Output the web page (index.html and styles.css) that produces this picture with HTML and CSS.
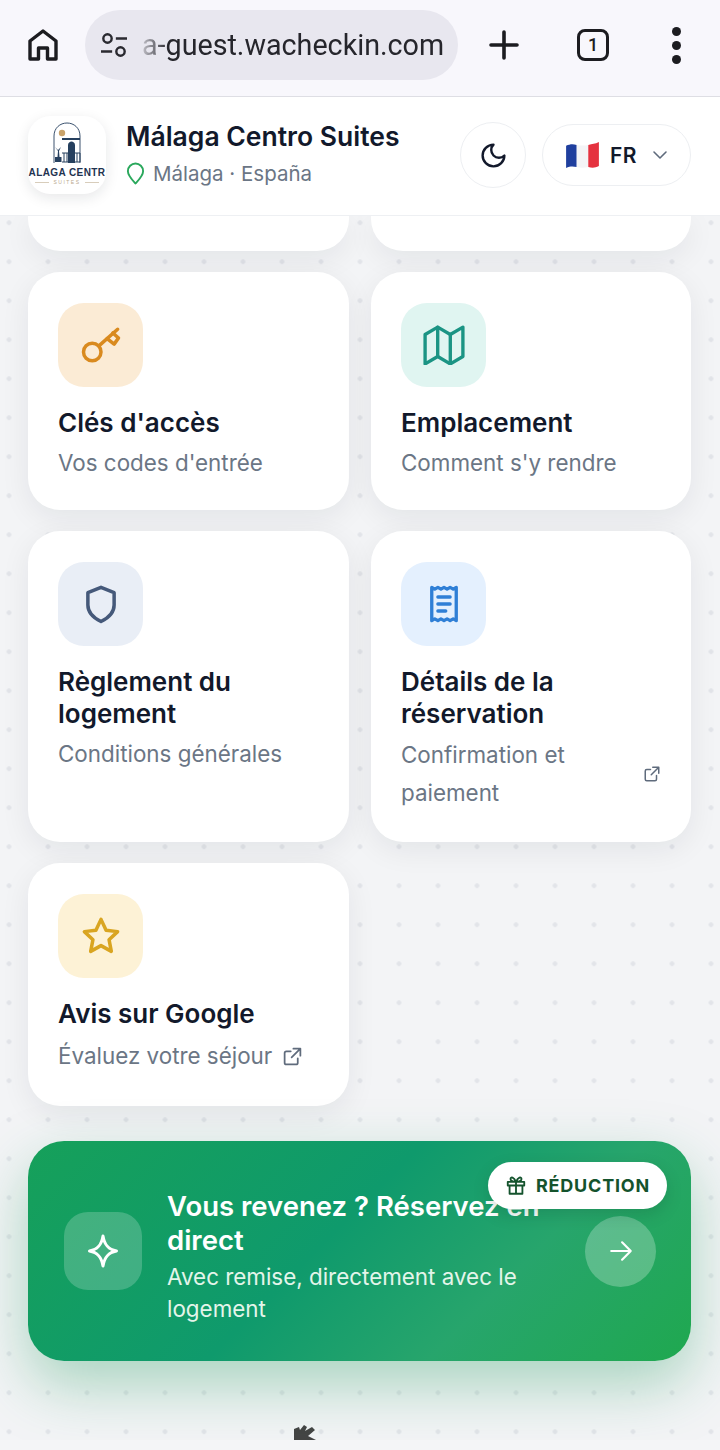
FILE: index.html
```html
<!DOCTYPE html>
<html lang="fr">
<head>
	<title>Málaga Centro Suites</title>
	<meta charset="utf-8">
	<link rel="stylesheet" href="styles.css">
</head>
<body>
<div class="chrome">
	<svg class="home-icon" viewBox="0 0 32 34" fill="none" stroke="#1c1c20" stroke-width="3.4" stroke-linejoin="round"><path d="M3 31V13L16 3l13 10v18h-8.500V20h-9v11z"/></svg>
	<div class="url-bar">
		<svg class="tune-icon" viewBox="0 0 30 28" fill="none" stroke="#2a2a30" stroke-width="2.600"><circle cx="8" cy="7" r="4.500"/><path d="M17 7h12M1 21h12"/><circle cx="22" cy="21" r="4.500"/></svg>
		<span class="url-text">a-guest.wacheckin.com</span>
	</div>
	<svg class="plus-icon" viewBox="0 0 30 30" stroke="#1c1c20" stroke-width="3.600" stroke-linecap="round"><path d="M15 2v26M2 15h26"/></svg>
	<div class="tab-count">1</div>
	<div class="more-dots"><i></i><i></i><i></i></div>
</div>

<header class="top">
	<div class="logo">
		<svg class="logo-art" viewBox="0 0 28 41" fill="none">
			<path d="M1 41V14C1 6 7 1 14 1s13 5 13 13v27" stroke="#26405f" stroke-width=".9"/>
			<circle cx="9" cy="11" r="3.200" fill="#c9a36b"/>
			<path d="M9 17h18" stroke="#26405f" stroke-width="1.800"/>
			<path d="M15 41V23c0-2 2-3.500 3.500-3.500S22 21 22 23v18z" fill="#26405f"/>
			<path d="M9 31h18M9 40h18M11 31v9M14 31v9M24 31v9M27 31v9" stroke="#26405f" stroke-width="1"/>
			<path d="M2 25l3 3 3-3-2 4 .5 6h2v5H2v-5h2.500l.5-6z" fill="#26405f"/>
		</svg>
		<div class="logo-name">ALAGA CENTR</div>
		<div class="logo-sub">SUITES</div>
	</div>
	<div class="top-title">
		<div class="hotel-name">Málaga Centro Suites</div>
		<div class="hotel-place">
			<svg class="pin-icon" viewBox="0 0 20 24" fill="none" stroke="#2aa85c" stroke-width="2"><path d="M10 22.500C6 18 2 14 2 9.500a8 8 0 0 1 16 0C18 14 14 18 10 22.500z" stroke-linejoin="round"/></svg>
			<span>Málaga · España</span>
		</div>
	</div>
	<button class="moon-btn">
		<svg viewBox="0 0 24 24" fill="none" stroke="#12192b" stroke-width="2" stroke-linecap="round" stroke-linejoin="round"><path d="M12 3a6 6 0 0 0 9 9 9 9 0 1 1-9-9z"/></svg>
	</button>
	<button class="lang-btn">
		<svg class="flag" viewBox="0 0 36 28"><path d="M1 4c4-2 7-2 11-1v23c-4-1-7-1-11 1z" fill="#1f3f9e"/><path d="M12 3c4 1 8 1 12 0v23c-4 1-8 1-12 0z" fill="#f4f4f6"/><path d="M24 3c4-1 7-1 11-3v25c-4 2-7 2-11 1z" fill="#e5323f"/></svg>
		<span>FR</span>
		<svg class="chev" viewBox="0 0 16 10" fill="none" stroke="#5f6b7c" stroke-width="1.600" stroke-linecap="round" stroke-linejoin="round"><path d="M2 2l6 6 6-6"/></svg>
	</button>
</header>

<main class="page">
	<div class="grid">
		<div class="card stub"></div>
		<div class="card stub"></div>

		<a class="card">
			<div class="ico orange">
				<svg viewBox="0 0 24 24" fill="none" stroke-width="2" stroke-linecap="round" stroke-linejoin="round"><circle cx="7" cy="16" r="5"/><path d="M10.800 12.500L21.500 3"/><path d="M15.500 8.300l4 3.200 2.500-3.500-3.200-2.900"/></svg>
			</div>
			<div class="card-title">Clés d'accès</div>
			<div class="card-sub">Vos codes d'entrée</div>
		</a>
		<a class="card">
			<div class="ico teal">
				<svg class="map" viewBox="2 2.500 20 19" fill="none" stroke-width="1.600" stroke-linecap="round" stroke-linejoin="round"><path d="M3 7l6-3.500L15 7l6-3.500v14L15 21l-6-3.500L3 21z"/><path d="M9 3.500v14M15 7v14"/></svg>
			</div>
			<div class="card-title">Emplacement</div>
			<div class="card-sub">Comment s'y rendre</div>
		</a>

		<a class="card">
			<div class="ico slate">
				<svg viewBox="0 0 24 24" fill="none" stroke-width="2" stroke-linecap="round" stroke-linejoin="round"><path d="M12 2.500l7.500 3v7c0 4.500-3.500 7.500-7.500 9.500-4-2-7.500-5-7.500-9.500v-7z"/></svg>
			</div>
			<div class="card-title">Règlement du logement</div>
			<div class="card-sub">Conditions générales</div>
		</a>
		<a class="card">
			<div class="ico blue">
				<svg viewBox="0 0 24 24" fill="none" stroke-width="1.900" stroke-linecap="round" stroke-linejoin="round"><path d="M5 2.500l1.750 1 1.750-1 1.750 1 1.750-1 1.750 1 1.750-1 1.750 1L19 2.500v19l-1.750-1-1.750 1-1.750-1-1.750 1-1.750-1-1.750 1-1.750-1-1.750 1z"/><path d="M8.500 8h7M8.500 12h7M8.500 16h4.500"/></svg>
			</div>
			<div class="card-title">Détails de la réservation</div>
			<div class="card-sub sub-wide">
				<span>Confirmation et paiement</span>
				<svg class="ext" viewBox="0 0 24 24" fill="none" stroke="#5f6b7c" stroke-width="2" stroke-linecap="round" stroke-linejoin="round"><path d="M13 3h8v8M21 3L11 13M18 14v5a2 2 0 0 1-2 2H5a2 2 0 0 1-2-2V8a2 2 0 0 1 2-2h5"/></svg>
			</div>
		</a>

		<a class="card">
			<div class="ico gold">
				<svg viewBox="0 0 24 24" fill="none" stroke-width="2" stroke-linecap="round" stroke-linejoin="round"><path d="M12 2.500l2.900 6.200 6.600.8-4.900 4.600 1.300 6.700-5.900-3.300-5.900 3.300 1.300-6.700-4.900-4.600 6.600-.8z"/></svg>
			</div>
			<div class="card-title">Avis sur Google</div>
			<div class="card-sub sub-link">
				<span>Évaluez votre séjour</span>
				<svg class="ext big" viewBox="0 0 24 24" fill="none" stroke="#5f6b7c" stroke-width="2" stroke-linecap="round" stroke-linejoin="round"><path d="M13 3h8v8M21 3L11 13M18 14v5a2 2 0 0 1-2 2H5a2 2 0 0 1-2-2V8a2 2 0 0 1 2-2h5"/></svg>
			</div>
		</a>
	</div>

	<a class="promo">
		<div class="promo-ico">
			<svg viewBox="0 0 24 24" fill="none" stroke="#fff" stroke-width="2" stroke-linejoin="round"><path d="M12 2c1 6 3.500 9 9 10-5.500 1-8 4-9 10-1-6-3.500-9-9-10 5.500-1 8-4 9-10z"/></svg>
		</div>
		<div class="promo-text">
			<div class="promo-title">Vous revenez ? Réservez en direct</div>
			<div class="promo-sub">Avec remise, directement avec le logement</div>
		</div>
		<div class="promo-go">
			<svg viewBox="0 0 24 24" fill="none" stroke="#fff" stroke-width="2" stroke-linecap="round" stroke-linejoin="round"><path d="M3 12h18M13 4l8 8-8 8"/></svg>
		</div>
		<div class="badge">
			<svg viewBox="0 0 24 24" fill="none" stroke="#14532d" stroke-width="2" stroke-linecap="round" stroke-linejoin="round"><path d="M3 8h18v4H3zM5 12v9h14v-9M12 8v13M12 8C10 3 6 2 6 5c0 2 3 3 6 3zM12 8c2-5 6-6 6-3 0 2-3 3-6 3z"/></svg>
			<span>RÉDUCTION</span>
		</div>
	</a>

	<svg class="hand" viewBox="0 0 24 15"><path d="M0 15V4l5-2 1 3 4-5 3 2-2 4 7-4 3 3-7 6 8 4z" fill="#444"/></svg>
</main>
<div class="strip"></div>
</body>
</html>
```

FILE: styles.css
```css
*{
	margin: 0;
	padding: 0;
	box-sizing: border-box;
}
body{
	width: 720px;
	height: 1450px;
	overflow: hidden;
	background: #f4f5f7;
	font-family: "Inter", "Noto Sans", sans-serif;
	color: #12192b;
}
/* browser bar */
.chrome{
	height: 97px;
	background: #f8f7fc;
	border-bottom: 1px solid #dedee4;
	display: flex;
	align-items: center;
	padding-bottom: 6px;
}
.home-icon{
	width: 32px;
	height: 34px;
	margin-left: 27px;
}
.url-bar{
	width: 373px;
	height: 70px;
	margin-left: 26px;
	border-radius: 35px;
	background: #e8e7ef;
	display: flex;
	align-items: center;
	padding-left: 15px;
	overflow: hidden;
}
.tune-icon{
	width: 28px;
	height: 26px;
	flex: none;
}
.url-text{
	margin-left: 14px;
	font-family: "Roboto", sans-serif;
	font-size: 28.700px;
	color: #26262c;
	white-space: nowrap;
	-webkit-mask-image: linear-gradient(90deg, rgba(0,0,0,.2), #000 26px);
	mask-image: linear-gradient(90deg, rgba(0,0,0,.2), #000 26px);
}
.plus-icon{
	width: 30px;
	height: 30px;
	margin-left: 31px;
}
.tab-count{
	width: 32px;
	height: 32px;
	margin-left: 58px;
	border: 3.5px solid #1c1c20;
	border-radius: 8px;
	font-family: "Roboto", sans-serif;
	font-size: 18px;
	font-weight: 500;
	line-height: 25px;
	text-align: center;
	color: #1c1c20;
}
.more-dots{
	margin-left: 63px;
	display: flex;
	flex-direction: column;
	gap: 5px;
}
.more-dots i{
	display: block;
	width: 9px;
	height: 9px;
	border-radius: 50%;
	background: #1c1c20;
}
/* hotel header */
.top{
	height: 119px;
	background: #fff;
	border-bottom: 1px solid #eef0f3;
	display: flex;
	align-items: center;
	padding: 0 29px 2px 28px;
}
.logo{
	width: 78px;
	height: 78px;
	border-radius: 22px;
	background: #fff;
	box-shadow: 0 4px 14px rgba(18,25,43,.1);
	overflow: hidden;
	display: flex;
	flex-direction: column;
	align-items: center;
	padding-top: 6px;
}
.logo-art{
	width: 28px;
	height: 41px;
	flex: none;
}
.logo-name{
	font-family: "Liberation Sans", sans-serif;
	font-size: 10px;
	font-weight: 700;
	letter-spacing: .4px;
	line-height: 12px;
	margin-top: 4px;
	white-space: nowrap;
	color: #1f3350;
}
.logo-sub{
	display: flex;
	align-items: center;
	gap: 4px;
	font-family: "Liberation Sans", sans-serif;
	font-size: 5px;
	line-height: 7px;
	letter-spacing: 1.500px;
	color: #b9a88e;
}
.logo-sub::before,
.logo-sub::after{
	content: "";
	width: 14px;
	height: 1px;
	background: #d8cdbb;
}
.top-title{
	margin-left: 20px;
	padding-bottom: 3px;
	flex: 1;
}
.hotel-name{
	font-size: 26.500px;
	font-weight: 600;
	line-height: 32px;
	white-space: nowrap;
}
.hotel-place{
	display: flex;
	align-items: center;
	gap: 8px;
	margin-top: 8px;
	font-size: 20.500px;
	line-height: 28px;
	color: #6b7685;
}
.pin-icon{
	width: 19px;
	height: 23px;
}
.moon-btn{
	width: 66px;
	height: 66px;
	flex: none;
	border-radius: 50%;
	border: 1px solid #edeff2;
	background: #fff;
	display: flex;
	align-items: center;
	justify-content: center;
}
.moon-btn svg{
	width: 29px;
	height: 29px;
}
.lang-btn{
	width: 149px;
	height: 62px;
	flex: none;
	margin-left: 16px;
	border-radius: 31px;
	border: 1px solid #edeff2;
	background: #fff;
	display: flex;
	align-items: center;
	padding-left: 22px;
	font-family: inherit;
	font-size: 21px;
	font-weight: 600;
	letter-spacing: .5px;
	color: #12192b;
}
.flag{
	width: 35px;
	height: 27px;
}
.lang-btn span{
	margin-left: 10px;
}
.chev{
	width: 16px;
	height: 10px;
	margin-left: 15px;
}
/* page */
.page{
	height: 1224px;
	overflow: hidden;
	background-color: #f3f4f6;
	background-image: radial-gradient(circle, #e2e4e9 2px, transparent 2.600px);
	background-size: 39px 39px;
	background-position: -10.500px -12.800px;
	padding: 0 29px 0 28px;
}
.grid{
	display: grid;
	grid-template-columns: 321px 320px;
	column-gap: 22px;
	row-gap: 21px;
}
.card{
	display: block;
	background: #fff;
	border-radius: 32px;
	padding: 31px 30px 30px;
	box-shadow: 0 8px 30px rgba(18,25,43,.07);
}
.stub{
	height: 35px;
	padding: 0;
	border-radius: 0 0 32px 32px;
}
.ico{
	width: 85px;
	height: 84px;
	border-radius: 26px;
	display: flex;
	align-items: center;
	justify-content: center;
}
.ico svg{
	width: 42px;
	height: 42px;
}
.ico .map{
	width: 42px;
	height: 40px;
}
.orange{ background: #fbebd5; stroke: #d98a1f; }
.teal{ background: #e0f5f1; stroke: #1b9484; }
.slate{ background: #e9eef6; stroke: #45597a; }
.blue{ background: #e4f0fe; stroke: #2f7fd6; }
.gold{ background: #fdf2d6; stroke: #d9a521; }
.card-title{
	margin-top: 20px;
	font-size: 26px;
	font-weight: 600;
	line-height: 32px;
}
.card-sub{
	margin-top: 6px;
	font-size: 22.400px;
	line-height: 35px;
	color: #6b7685;
}
.sub-wide{
	display: flex;
	align-items: center;
	justify-content: space-between;
	line-height: 38px;
}
.sub-wide span{
	width: 200px;
}
.sub-link{
	display: flex;
	align-items: center;
	gap: 10px;
	line-height: 40px;
}
.ext{
	width: 18px;
	height: 18px;
	flex: none;
}
.ext.big{
	width: 21px;
	height: 21px;
}
/* promo banner */
.promo{
	position: relative;
	display: flex;
	align-items: center;
	height: 220px;
	margin-top: 35px;
	padding: 0 35px 0 36px;
	border-radius: 36px;
	background: linear-gradient(135deg, #16a05a 0%, #0f9a6c 45%, #27a56c 70%, #1fa84f 100%);
	box-shadow: 0 24px 60px rgba(22,150,85,.34);
	color: #fff;
}
.promo-ico{
	width: 78px;
	height: 78px;
	flex: none;
	border-radius: 24px;
	background: rgba(255,255,255,.2);
	display: flex;
	align-items: center;
	justify-content: center;
}
.promo-ico svg{
	width: 36px;
	height: 36px;
}
.promo-text{
	margin-left: 25px;
	padding-top: 12px;
	width: 385px;
}
.promo-title{
	font-size: 27.500px;
	font-weight: 600;
	line-height: 34px;
}
.promo-sub{
	margin-top: 4px;
	font-size: 22.400px;
	line-height: 32px;
	color: #e3f5ea;
}
.promo-go{
	width: 71px;
	height: 71px;
	flex: none;
	margin-left: auto;
	border-radius: 50%;
	background: rgba(255,255,255,.25);
	display: flex;
	align-items: center;
	justify-content: center;
}
.promo-go svg{
	width: 26px;
	height: 26px;
}
.badge{
	position: absolute;
	top: 21px;
	right: 24px;
	width: 179px;
	height: 47px;
	border-radius: 24px;
	background: #fff;
	box-shadow: 0 6px 16px rgba(10,60,35,.18);
	display: flex;
	align-items: center;
	justify-content: center;
	gap: 9px;
	font-size: 18px;
	font-weight: 700;
	letter-spacing: .8px;
	color: #14532d;
}
.badge svg{
	width: 22px;
	height: 23px;
	flex: none;
}
.hand{
	display: block;
	width: 24px;
	height: 15px;
	margin: 64px 0 0 266px;
}
.strip{
	height: 10px;
	background: #f4f5f7;
}
```
